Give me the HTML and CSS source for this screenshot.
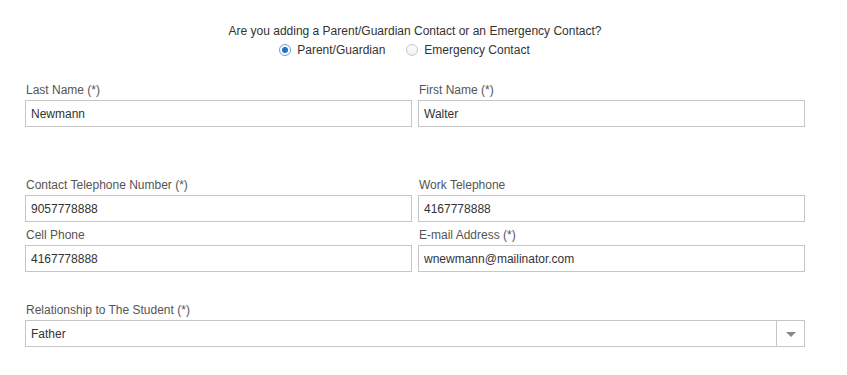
FILE: index.html
```html
<!DOCTYPE html>
<html lang="en">
<head>
<meta charset="utf-8">
<title>Add Contact</title>
<link rel="stylesheet" href="styles.css">
</head>
<body>
<div class="page">
  <div class="question">Are you adding a Parent/Guardian Contact or an Emergency Contact?</div>
  <div class="radios">
    <label class="option"><span class="radio checked"></span><span>Parent/Guardian</span></label>
    <label class="option"><span class="radio"></span><span>Emergency Contact</span></label>
  </div>
  <div class="grid">
    <div class="field first-row">
      <div class="label">Last Name (*)</div>
      <input class="input" type="text" value="Newmann">
    </div>
    <div class="field first-row">
      <div class="label">First Name (*)</div>
      <input class="input" type="text" value="Walter">
    </div>
    <div class="field">
      <div class="label">Contact Telephone Number (*)</div>
      <input class="input" type="text" value="9057778888">
    </div>
    <div class="field">
      <div class="label">Work Telephone</div>
      <input class="input" type="text" value="4167778888">
    </div>
    <div class="field">
      <div class="label">Cell Phone</div>
      <input class="input" type="text" value="4167778888">
    </div>
    <div class="field">
      <div class="label">E-mail Address (*)</div>
      <input class="input" type="text" value="wnewmann@mailinator.com">
    </div>
  </div>
  <div class="field select-field">
    <div class="label">Relationship to The Student (*)</div>
    <div class="select">
      <span class="select-value">Father</span>
      <span class="select-arrow"><span class="triangle"></span></span>
    </div>
  </div>
</div>
</body>
</html>
```

FILE: styles.css
```css
* { box-sizing: border-box; }
html, body {
  margin: 0;
  padding: 0;
  background: #fff;
}
body {
  font-family: "Liberation Sans", Arial, sans-serif;
  font-size: 12px;
  color: #333;
}
.page {
  width: 830px;
  padding: 23px 0 0 25px;
}
.question {
  width: 780px;
  text-align: center;
  line-height: 16px;
  color: #333;
}
.radios {
  width: 780px;
  margin-top: 3px;
  height: 16px;
  display: flex;
  justify-content: center;
  align-items: center;
}
.option {
  display: flex;
  align-items: center;
  line-height: 16px;
  margin-right: 21px;
  color: #333;
}
.radio {
  width: 12px;
  height: 12px;
  border-radius: 50%;
  border: 1px solid #c9c9c9;
  background: linear-gradient(#ffffff, #f0f0f0);
  margin-right: 6px;
  display: flex;
  align-items: center;
  justify-content: center;
}
.radio.checked {
  border-color: #6a9fd8;
  background: #fff;
}
.radio.checked::after {
  content: "";
  width: 6px;
  height: 6px;
  border-radius: 50%;
  background: #2870c2;
}
.grid {
  margin-top: 26px;
  width: 780px;
  display: grid;
  grid-template-columns: 387px 387px;
  column-gap: 6px;
  row-gap: 7px;
}
.first-row {
  margin-bottom: 45px;
}
.label {
  line-height: 10px;
  padding-top: 1px;
  padding-bottom: 5px;
  color: #555;
  padding-left: 1px;
}
.input {
  display: block;
  width: 100%;
  height: 27px;
  margin: 0;
  border: 1px solid #c6c6c6;
  border-radius: 0;
  padding: 0 5px;
  font-family: "Liberation Sans", Arial, sans-serif;
  font-size: 12px;
  color: #333;
  background: #fff;
  outline: none;
}
.select-field {
  width: 780px;
  margin-top: 32px;
}
.select {
  height: 27px;
  border: 1px solid #c6c6c6;
  display: flex;
  align-items: stretch;
  background: #fff;
}
.select-value {
  flex: 1;
  display: flex;
  align-items: center;
  padding-left: 5px;
  color: #333;
}
.select-arrow {
  width: 28px;
  border-left: 1px solid #c6c6c6;
  display: flex;
  align-items: center;
  justify-content: center;
}
.triangle {
  width: 0;
  height: 0;
  border-left: 5px solid transparent;
  border-right: 5px solid transparent;
  border-top: 5px solid #8a8a8a;
  margin-top: 1px;
}
```
